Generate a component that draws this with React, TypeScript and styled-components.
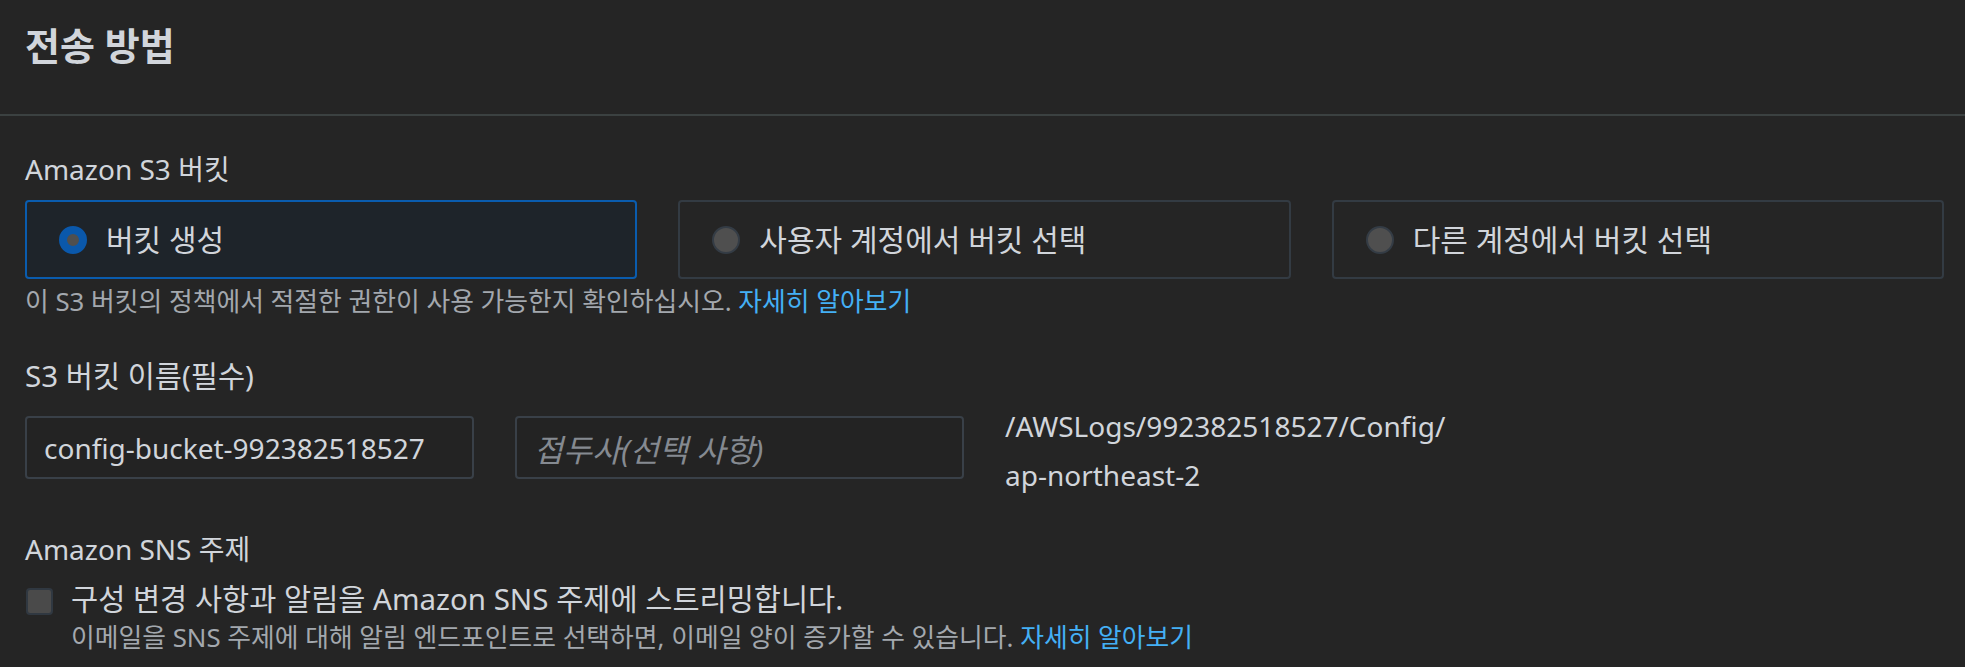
import React from "react";
import styled, { createGlobalStyle } from "styled-components";

// delivery method panel (dark console form)

const GlobalStyle = createGlobalStyle`
  html, body {
    margin: 0;
    padding: 0;
    background-color: #252525;
  }
  body {
    font-family: "Noto Sans", "Noto Sans CJK KR", sans-serif;
    color: #d1d5db;
  }
  * {
    box-sizing: border-box;
  }
`;

type BucketChoice = {
  id: string;
  label: string;
};

const bucketChoices: BucketChoice[] = [
  { id: "create", label: "버킷 생성" },
  { id: "mine", label: "사용자 계정에서 버킷 선택" },
  { id: "other", label: "다른 계정에서 버킷 선택" },
];

const App: React.FC = () => {
  const selected = "create";

  return (
    <Wrapper>
      <GlobalStyle />
      <Header>
        <PageTitle>전송 방법</PageTitle>
      </Header>
      <Body>
        <FieldLabel>Amazon S3 버킷</FieldLabel>
        <TileRow>
          {bucketChoices.map((choice) => (
            <Tile key={choice.id} $active={choice.id === selected}>
              <Radio $active={choice.id === selected} />
              <TileLabel>{choice.label}</TileLabel>
            </Tile>
          ))}
        </TileRow>
        <HelpText>
          이 S3 버킷의 정책에서 적절한 권한이 사용 가능한지 확인하십시오.{" "}
          <Link>자세히 알아보기</Link>
        </HelpText>

        <FieldLabel $gap={41} $size={29.5}>
          S3 버킷 이름(필수)
        </FieldLabel>
        <InputRow>
          <TextBox>config-bucket-992382518527</TextBox>
          <TextBox $placeholder>접두사(선택 사항)</TextBox>
          <PathText>
            /AWSLogs/992382518527/Config/
            <br />
            ap-northeast-2
          </PathText>
        </InputRow>

        <FieldLabel $gap={31}>Amazon SNS 주제</FieldLabel>
        <CheckRow>
          <CheckBox />
          <CheckContent>
            <CheckLabel>구성 변경 사항과 알림을 Amazon SNS 주제에 스트리밍합니다.</CheckLabel>
            <HelpText $tight>
              이메일을 SNS 주제에 대해 알림 엔드포인트로 선택하면, 이메일 양이 증가할 수
              있습니다. <Link>자세히 알아보기</Link>
            </HelpText>
          </CheckContent>
        </CheckRow>
      </Body>
    </Wrapper>
  );
};

export default App;

const Wrapper = styled.div`
  width: 100%;
  height: 667px;
  overflow: hidden;
  background-color: #252525;
`;

const Header = styled.div`
  padding: 23px 25px 47px;
  border-bottom: 2px solid #3b4141;
`;

const PageTitle = styled.h2`
  margin: 0;
  font-size: 38px;
  line-height: 44px;
  font-weight: 700;
  color: #d1d5db;
`;

const Body = styled.div`
  display: flex;
  flex-direction: column;
  padding: 0 21px 0 25px;
`;

const FieldLabel = styled.div<{ $gap?: number; $size?: number }>`
  margin-top: ${(p) => p.$gap ?? 35}px;
  font-size: ${(p) => p.$size ?? 28}px;
  line-height: 36px;
  color: #d1d5db;
`;

const TileRow = styled.div`
  display: grid;
  grid-template-columns: repeat(3, 1fr);
  gap: 41px;
  margin-top: 13px;
`;

const Tile = styled.div<{ $active?: boolean }>`
  display: flex;
  align-items: center;
  gap: 19px;
  height: 79px;
  padding-left: 32px;
  border: 2px solid ${(p) => (p.$active ? "#0a5cae" : "#333b43")};
  border-radius: 4px;
  background-color: ${(p) => (p.$active ? "#1e242a" : "#252525")};
`;

const Radio = styled.span<{ $active?: boolean }>`
  flex: none;
  width: 28px;
  height: 28px;
  border-radius: 50%;
  background-color: #4f4f4f;
  border: ${(p) => (p.$active ? "8.5px solid #0a58ab" : "2px solid #343c45")};
`;

const TileLabel = styled.span`
  font-size: 30px;
  line-height: 36px;
  color: #d1d5db;
`;

const HelpText = styled.div<{ $tight?: boolean }>`
  margin-top: ${(p) => (p.$tight ? 4 : 6)}px;
  font-size: 25.8px;
  line-height: 32px;
  color: #a3a8ae;
`;

const Link = styled.span`
  color: #44b0f5;
`;

const InputRow = styled.div`
  display: flex;
  align-items: flex-start;
  gap: 41px;
  margin-top: 8px;
`;

const TextBox = styled.div<{ $placeholder?: boolean }>`
  flex: none;
  width: 449px;
  height: 63px;
  margin-top: 14px;
  display: flex;
  align-items: center;
  padding-left: 17px;
  border: 2px solid #394048;
  border-radius: 4px;
  background-color: #232323;
  font-size: ${(p) => (p.$placeholder ? 31.5 : 28)}px;
  color: ${(p) => (p.$placeholder ? "#858a91" : "#d1d5db")};
  font-style: ${(p) => (p.$placeholder ? "italic" : "normal")};
`;

const PathText = styled.div`
  font-size: 28px;
  line-height: 49px;
  color: #d1d5db;
`;

const CheckRow = styled.div`
  display: flex;
  align-items: flex-start;
  gap: 18px;
  margin-top: 14px;
`;

const CheckBox = styled.span`
  flex: none;
  width: 27px;
  height: 27px;
  margin-top: 7px;
  margin-left: 1px;
  border-radius: 4px;
  border: 2px solid #303841;
  background-color: #4a4a4a;
`;

const CheckContent = styled.div`
  display: flex;
  flex-direction: column;
`;

const CheckLabel = styled.div`
  font-size: 29.5px;
  line-height: 36px;
  color: #d1d5db;
`;
